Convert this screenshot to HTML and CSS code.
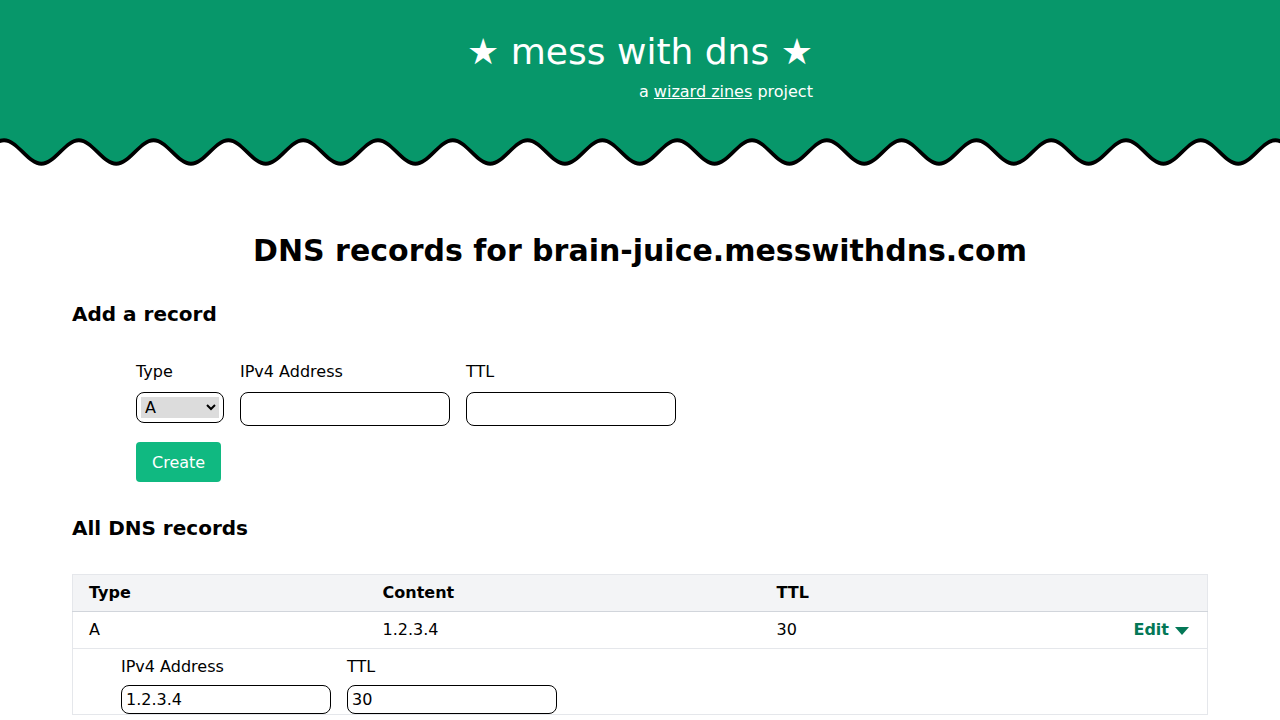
FILE: index.html
```html
<!DOCTYPE html>
<html>
<head>
<meta charset="utf-8">
<title>mess with dns</title>
<link rel="stylesheet" href="styles.css">
</head>
<body>
<header class="site-header">
  <div class="brand">
    <div class="brand-title">★ mess with dns ★</div>
    <div class="brand-sub">a <a href="#">wizard zines</a> project</div>
  </div>
</header>
<svg class="wave" viewBox="0 0 1280 40" preserveAspectRatio="none" aria-hidden="true">
  <path d="M -70.8 9.5 c 13.5 0 23.9 23.5 37.4 23.5 c 13.5 0 23.9 -23.5 37.4 -23.5 c 13.5 0 23.9 23.5 37.4 23.5 c 13.5 0 23.9 -23.5 37.4 -23.5 c 13.5 0 23.9 23.5 37.4 23.5 c 13.5 0 23.9 -23.5 37.4 -23.5 c 13.5 0 23.9 23.5 37.4 23.5 c 13.5 0 23.9 -23.5 37.4 -23.5 c 13.5 0 23.9 23.5 37.4 23.5 c 13.5 0 23.9 -23.5 37.4 -23.5 c 13.5 0 23.9 23.5 37.4 23.5 c 13.5 0 23.9 -23.5 37.4 -23.5 c 13.5 0 23.9 23.5 37.4 23.5 c 13.5 0 23.9 -23.5 37.4 -23.5 c 13.5 0 23.9 23.5 37.4 23.5 c 13.5 0 23.9 -23.5 37.4 -23.5 c 13.5 0 23.9 23.5 37.4 23.5 c 13.5 0 23.9 -23.5 37.4 -23.5 c 13.5 0 23.9 23.5 37.4 23.5 c 13.5 0 23.9 -23.5 37.4 -23.5 c 13.5 0 23.9 23.5 37.4 23.5 c 13.5 0 23.9 -23.5 37.4 -23.5 c 13.5 0 23.9 23.5 37.4 23.5 c 13.5 0 23.9 -23.5 37.4 -23.5 c 13.5 0 23.9 23.5 37.4 23.5 c 13.5 0 23.9 -23.5 37.4 -23.5 c 13.5 0 23.9 23.5 37.4 23.5 c 13.5 0 23.9 -23.5 37.4 -23.5 c 13.5 0 23.9 23.5 37.4 23.5 c 13.5 0 23.9 -23.5 37.4 -23.5 c 13.5 0 23.9 23.5 37.4 23.5 c 13.5 0 23.9 -23.5 37.4 -23.5 c 13.5 0 23.9 23.5 37.4 23.5 c 13.5 0 23.9 -23.5 37.4 -23.5 c 13.5 0 23.9 23.5 37.4 23.5 c 13.5 0 23.9 -23.5 37.4 -23.5 c 13.5 0 23.9 23.5 37.4 23.5 c 13.5 0 23.9 -23.5 37.4 -23.5 L 1350 0 L -73 0 Z" class="wave-fill"/>
  <path d="M -70.8 9.5 c 13.5 0 23.9 23.5 37.4 23.5 c 13.5 0 23.9 -23.5 37.4 -23.5 c 13.5 0 23.9 23.5 37.4 23.5 c 13.5 0 23.9 -23.5 37.4 -23.5 c 13.5 0 23.9 23.5 37.4 23.5 c 13.5 0 23.9 -23.5 37.4 -23.5 c 13.5 0 23.9 23.5 37.4 23.5 c 13.5 0 23.9 -23.5 37.4 -23.5 c 13.5 0 23.9 23.5 37.4 23.5 c 13.5 0 23.9 -23.5 37.4 -23.5 c 13.5 0 23.9 23.5 37.4 23.5 c 13.5 0 23.9 -23.5 37.4 -23.5 c 13.5 0 23.9 23.5 37.4 23.5 c 13.5 0 23.9 -23.5 37.4 -23.5 c 13.5 0 23.9 23.5 37.4 23.5 c 13.5 0 23.9 -23.5 37.4 -23.5 c 13.5 0 23.9 23.5 37.4 23.5 c 13.5 0 23.9 -23.5 37.4 -23.5 c 13.5 0 23.9 23.5 37.4 23.5 c 13.5 0 23.9 -23.5 37.4 -23.5 c 13.5 0 23.9 23.5 37.4 23.5 c 13.5 0 23.9 -23.5 37.4 -23.5 c 13.5 0 23.9 23.5 37.4 23.5 c 13.5 0 23.9 -23.5 37.4 -23.5 c 13.5 0 23.9 23.5 37.4 23.5 c 13.5 0 23.9 -23.5 37.4 -23.5 c 13.5 0 23.9 23.5 37.4 23.5 c 13.5 0 23.9 -23.5 37.4 -23.5 c 13.5 0 23.9 23.5 37.4 23.5 c 13.5 0 23.9 -23.5 37.4 -23.5 c 13.5 0 23.9 23.5 37.4 23.5 c 13.5 0 23.9 -23.5 37.4 -23.5 c 13.5 0 23.9 23.5 37.4 23.5 c 13.5 0 23.9 -23.5 37.4 -23.5 c 13.5 0 23.9 23.5 37.4 23.5 c 13.5 0 23.9 -23.5 37.4 -23.5 c 13.5 0 23.9 23.5 37.4 23.5 c 13.5 0 23.9 -23.5 37.4 -23.5" class="wave-shadow"/>
  <path d="M -70.8 9.5 c 13.5 0 23.9 23.5 37.4 23.5 c 13.5 0 23.9 -23.5 37.4 -23.5 c 13.5 0 23.9 23.5 37.4 23.5 c 13.5 0 23.9 -23.5 37.4 -23.5 c 13.5 0 23.9 23.5 37.4 23.5 c 13.5 0 23.9 -23.5 37.4 -23.5 c 13.5 0 23.9 23.5 37.4 23.5 c 13.5 0 23.9 -23.5 37.4 -23.5 c 13.5 0 23.9 23.5 37.4 23.5 c 13.5 0 23.9 -23.5 37.4 -23.5 c 13.5 0 23.9 23.5 37.4 23.5 c 13.5 0 23.9 -23.5 37.4 -23.5 c 13.5 0 23.9 23.5 37.4 23.5 c 13.5 0 23.9 -23.5 37.4 -23.5 c 13.5 0 23.9 23.5 37.4 23.5 c 13.5 0 23.9 -23.5 37.4 -23.5 c 13.5 0 23.9 23.5 37.4 23.5 c 13.5 0 23.9 -23.5 37.4 -23.5 c 13.5 0 23.9 23.5 37.4 23.5 c 13.5 0 23.9 -23.5 37.4 -23.5 c 13.5 0 23.9 23.5 37.4 23.5 c 13.5 0 23.9 -23.5 37.4 -23.5 c 13.5 0 23.9 23.5 37.4 23.5 c 13.5 0 23.9 -23.5 37.4 -23.5 c 13.5 0 23.9 23.5 37.4 23.5 c 13.5 0 23.9 -23.5 37.4 -23.5 c 13.5 0 23.9 23.5 37.4 23.5 c 13.5 0 23.9 -23.5 37.4 -23.5 c 13.5 0 23.9 23.5 37.4 23.5 c 13.5 0 23.9 -23.5 37.4 -23.5 c 13.5 0 23.9 23.5 37.4 23.5 c 13.5 0 23.9 -23.5 37.4 -23.5 c 13.5 0 23.9 23.5 37.4 23.5 c 13.5 0 23.9 -23.5 37.4 -23.5 c 13.5 0 23.9 23.5 37.4 23.5 c 13.5 0 23.9 -23.5 37.4 -23.5 c 13.5 0 23.9 23.5 37.4 23.5 c 13.5 0 23.9 -23.5 37.4 -23.5" class="wave-line"/>
</svg>

<main class="content">
  <h1 class="page-title">DNS records for brain-juice.messwithdns.com</h1>

  <h2 class="section-title">Add a record</h2>
  <form class="add-form">
    <div class="fields">
      <label class="field">
        <span class="field-label">Type</span>
        <span class="select-wrap">
          <select class="type-select">
            <option>A</option>
            <option>AAAA</option>
            <option>CNAME</option>
            <option>MX</option>
            <option>NS</option>
            <option>TXT</option>
          </select>
        </span>
      </label>
      <label class="field">
        <span class="field-label">IPv4 Address</span>
        <input class="text-input" type="text">
      </label>
      <label class="field">
        <span class="field-label">TTL</span>
        <input class="text-input" type="text">
      </label>
    </div>
    <button type="button" class="create-btn">Create</button>
  </form>

  <h2 class="section-title section-title-2">All DNS records</h2>
  <table class="records">
    <thead>
      <tr>
        <th class="col-type">Type</th>
        <th class="col-content">Content</th>
        <th class="col-ttl">TTL</th>
        <th class="col-actions"></th>
      </tr>
    </thead>
    <tbody>
      <tr class="record-row">
        <td>A</td>
        <td>1.2.3.4</td>
        <td>30</td>
        <td class="actions"><a href="#" class="edit-link">Edit <svg class="caret" viewBox="0 0 14 8" width="14" height="8"><path d="M0 0 L14 0 L7 8 Z"/></svg></a></td>
      </tr>
      <tr class="edit-row">
        <td colspan="4">
          <div class="edit-fields">
            <label class="field">
              <span class="field-label">IPv4 Address</span>
              <input class="text-input small" type="text" value="1.2.3.4">
            </label>
            <label class="field">
              <span class="field-label">TTL</span>
              <input class="text-input small" type="text" value="30">
            </label>
          </div>
        </td>
      </tr>
    </tbody>
  </table>
</main>
</body>
</html>
```

FILE: styles.css
```css
* { box-sizing: border-box; }

body {
  margin: 0;
  font-family: "DejaVu Sans", "Liberation Sans", sans-serif;
  color: #000;
  background: #fff;
  font-size: 16px;
  line-height: 24px;
}

.site-header {
  background: #07976a;
  color: #fff;
  height: 140px;
  display: flex;
  justify-content: center;
  padding-top: 29px;
}

.brand {
  display: flex;
  flex-direction: column;
  align-items: flex-end;
}

.brand-title {
  font-size: 36px;
  line-height: 46px;
}

.brand-sub {
  font-size: 16px;
  line-height: 24px;
  margin-top: 5px;
}

.brand-sub a {
  color: #fff;
  text-decoration: underline;
}

.wave {
  display: block;
  width: 1280px;
  height: 40px;
  margin-top: -10px;
}

.wave-fill { fill: #07976a; }
.wave-line {
  fill: none;
  stroke: #000;
  stroke-width: 2.5px;
}
.wave-shadow {
  fill: none;
  stroke: #000;
  stroke-width: 2.5px;
  transform: translateY(1.5px);
}

.content {
  padding: 0 72px;
}

.page-title {
  margin: 63px 0 0;
  text-align: center;
  font-size: 30px;
  line-height: 36px;
  font-weight: bold;
}

.section-title {
  margin: 31px 0 0;
  font-size: 20px;
  line-height: 28px;
  font-weight: bold;
}

.add-form {
  padding-left: 64px;
  margin-top: 32px;
}

.fields {
  display: flex;
  gap: 16px;
  align-items: flex-start;
}

.field {
  display: flex;
  flex-direction: column;
}

.field-label {
  line-height: 24px;
  margin-bottom: 8px;
}

.select-wrap {
  display: inline-flex;
  width: 88px;
  height: 31px;
  border: 1px solid #000;
  border-radius: 8px;
  padding: 4px;
  align-items: center;
}

.type-select {
  width: 78px;
  height: 21px;
  border: none;
  border-radius: 0;
  background: #dcdcdc;
  font-family: inherit;
  font-size: 16px;
  color: #000;
  padding: 0;
  outline: none;
}

.text-input {
  width: 210px;
  height: 34px;
  border: 1px solid #000;
  border-radius: 8px;
  font-family: inherit;
  font-size: 16px;
  padding: 0 4px;
  background: #fff;
  color: #000;
}

.text-input.small {
  height: 29px;
}

.create-btn {
  margin-top: 16px;
  background: #10b981;
  color: #fff;
  border: none;
  border-radius: 4px;
  font-family: inherit;
  font-size: 16px;
  height: 40px;
  padding: 0 16px;
  display: block;
}

.section-title-2 {
  margin-top: 32px;
}

.records {
  margin-top: 32px;
  width: 100%;
  border-collapse: collapse;
  border: 1px solid #e5e7eb;
}

.records thead tr {
  background: #f3f4f6;
  border-bottom: 1px solid #d1d5db;
}

.records th {
  text-align: left;
  font-weight: bold;
  padding: 6px 16px;
  height: 36px;
}

.col-type { width: 294px; }
.col-content { width: 394px; }
.col-ttl { width: 200px; }

.records td {
  padding: 6px 16px;
  height: 37px;
}

.record-row {
  border-bottom: 1px solid #e5e7eb;
}

.actions {
  text-align: right;
  padding-right: 18px !important;
}

.edit-link {
  color: #047857;
  font-weight: bold;
  text-decoration: none;
  display: inline-flex;
  align-items: center;
  gap: 6px;
}

.caret {
  fill: #047857;
  width: 14px;
  height: 8px;
  margin-top: 2px;
}

.edit-row td {
  padding: 6px 16px 0 48px;
}

.edit-fields {
  display: flex;
  gap: 16px;
}

.edit-fields .field-label {
  margin-bottom: 6px;
}
```
